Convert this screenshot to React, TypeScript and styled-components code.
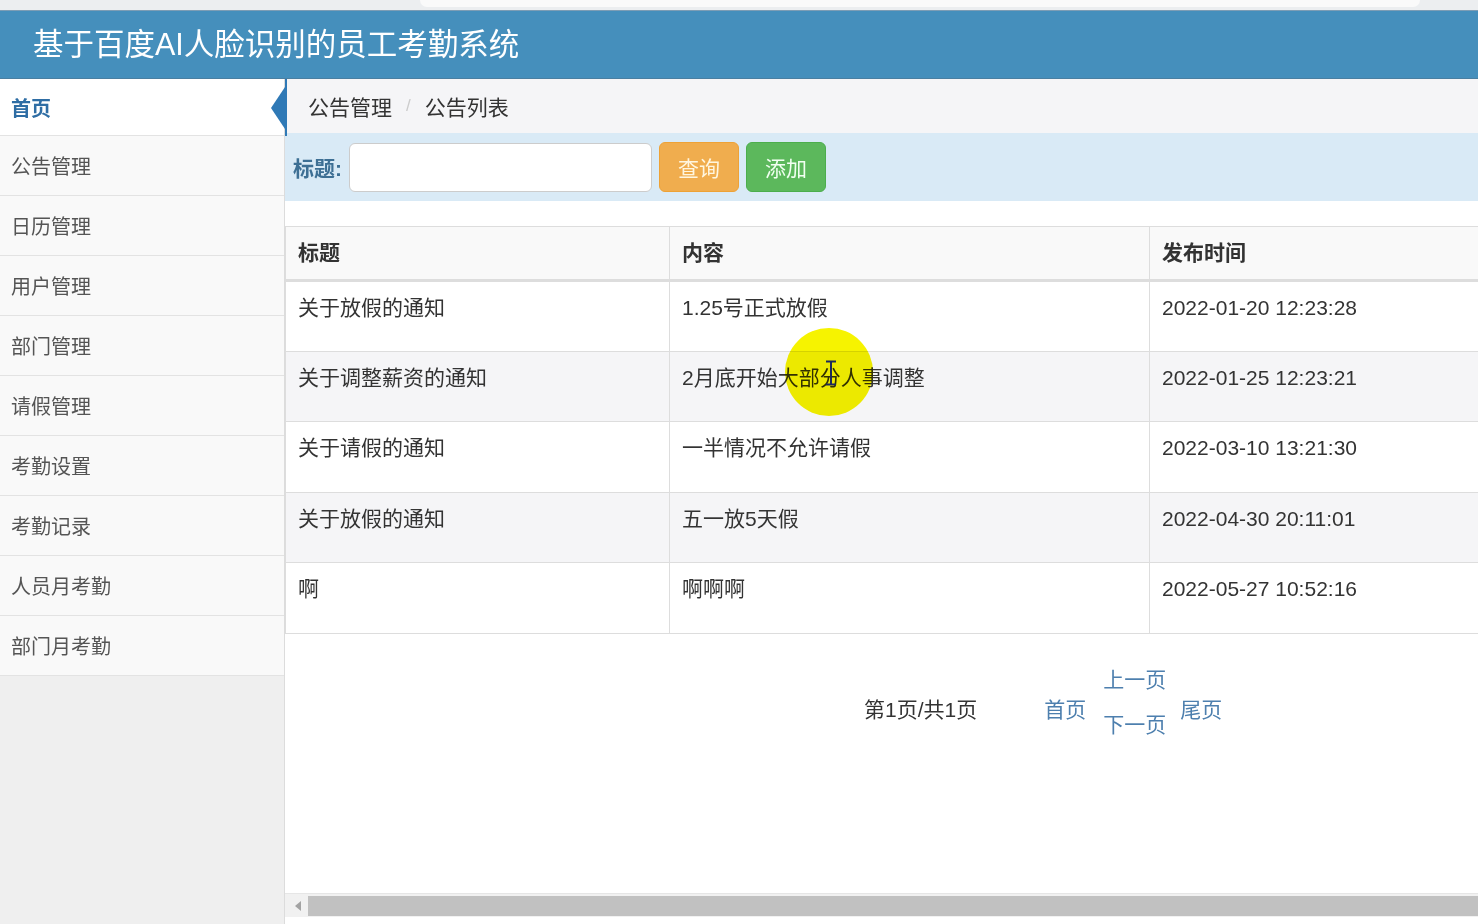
import React from 'react';
import styled, { createGlobalStyle } from 'styled-components';

const GlobalStyle = createGlobalStyle`
  body {
    margin: 0;
    font-family: "Liberation Sans", "Noto Sans CJK SC", sans-serif;
    color: #333;
    background: #fff;
  }
`;

const Page = styled.div`
  position: relative;
  width: 1478px;
  height: 924px;
  overflow: hidden;
  display: flex;
  flex-direction: column;
`;

const TopStrip = styled.div`
  height: 10px;
  flex-shrink: 0;
  background: #eceef0;
  padding-left: 420px;
  box-sizing: border-box;
`;

const TopPill = styled.div`
  width: 1000px;
  height: 7px;
  background: #fafafa;
  border-radius: 0 0 10px 10px;
`;

const Header = styled.div`
  height: 69px;
  flex-shrink: 0;
  box-sizing: border-box;
  background: #458fbc;
  border-top: 1px solid #7d9db5;
  border-bottom: 1px solid #4a7fa1;
  display: flex;
  align-items: center;
  padding: 0 0 5px 33px;
  color: #fff;
  font-size: 30.5px;
`;

const Body = styled.div`
  flex: 1;
  display: flex;
  min-height: 0;
`;

const Sidebar = styled.div`
  width: 284px;
  flex-shrink: 0;
  background: #efefef;
  border-right: 1px solid #dcdcdc;
  display: flex;
  flex-direction: column;
`;

const NavItem = styled.div<{ $active?: boolean }>`
  position: relative;
  height: ${({ $active }) => ($active ? 56 : 59)}px;
  flex-shrink: 0;
  border-bottom: 1px solid #e3e3e3;
  background: ${({ $active }) => ($active ? '#fff' : '#f9f9f9')};
  color: ${({ $active }) => ($active ? '#2e6da4' : '#555')};
  font-weight: ${({ $active }) => ($active ? 700 : 400)};
  font-size: 20px;
  display: flex;
  align-items: center;
  padding-left: 11px;
`;

const ActiveArrow = styled.span`
  position: absolute;
  right: -3px;
  top: 5px;
  width: 0;
  height: 0;
  border-top: 24px solid transparent;
  border-bottom: 24px solid transparent;
  border-right: 16px solid #2f79b6;
`;

const ActiveBar = styled.span`
  position: absolute;
  right: -3px;
  top: 0;
  bottom: -1px;
  width: 2px;
  background: #2f79b6;
`;

const Main = styled.div`
  flex: 1;
  min-width: 0;
  display: flex;
  flex-direction: column;
  overflow: hidden;
  font-size: 21px;
`;

const Breadcrumb = styled.div`
  height: 54px;
  flex-shrink: 0;
  background: #f5f5f7;
  display: flex;
  align-items: center;
  padding-left: 23px;
  gap: 14px;
  color: #333;
`;

const Crumb = styled.span<{ $sep?: boolean }>`
  color: ${({ $sep }) => ($sep ? '#ccc' : '#333')};
  font-size: ${({ $sep }) => ($sep ? 17 : 21)}px;
`;

const SearchBar = styled.div`
  height: 68px;
  flex-shrink: 0;
  background: #d9eaf6;
  display: flex;
  align-items: center;
  padding-left: 8px;
  gap: 7px;
`;

const SearchLabel = styled.label`
  font-weight: 700;
  color: #3d6f94;
  font-size: 21px;
`;

const SearchInput = styled.input`
  width: 303px;
  height: 49px;
  box-sizing: border-box;
  border: 1px solid #ccc;
  border-radius: 6px;
  background: #fff;
`;

const Button = styled.button<{ $tone: 'warn' | 'ok' }>`
  width: 80px;
  height: 50px;
  border: 1px solid ${({ $tone }) => ($tone === 'warn' ? '#eea236' : '#4cae4c')};
  border-radius: 6px;
  background: ${({ $tone }) => ($tone === 'warn' ? '#f0ad4e' : '#5cb85c')};
  color: ${({ $tone }) => ($tone === 'warn' ? '#fff6df' : '#f1fff1')};
  font-family: inherit;
  font-size: 21px;
  padding: 0;
`;

const Table = styled.table`
  margin-top: 25px;
  width: 1400px;
  flex-shrink: 0;
  border-collapse: collapse;
  border: 1px solid #ddd;
  border-right: none;
`;

const Th = styled.th<{ $w?: number }>`
  width: ${({ $w }) => ($w ? `${$w}px` : 'auto')};
  height: 54px;
  box-sizing: border-box;
  text-align: left;
  font-weight: 700;
  padding: 0 12px;
  border-left: 1px solid #ddd;
  border-bottom: 3px solid #ddd;
  background: #f9f9f9;
  line-height: 30px;
`;

const Row = styled.tr<{ $shade?: boolean }>`
  background: ${({ $shade }) => ($shade ? '#f5f5f7' : '#fff')};
`;

const Td = styled.td`
  height: 70.5px;
  box-sizing: border-box;
  vertical-align: top;
  padding: 11px 12px 0;
  line-height: 30px;
  border-left: 1px solid #ddd;
  border-top: 1px solid #ddd;
`;

const Pager = styled.div`
  display: flex;
  align-items: flex-start;
  margin-top: 31px;
  padding-left: 579px;
  line-height: 30px;
`;

const PageInfo = styled.span`
  margin-top: 30px;
  color: #333;
`;

const PageLink = styled.a<{ $side?: boolean; $gap?: number }>`
  color: #4d7fae;
  text-decoration: none;
  margin-top: ${({ $side }) => ($side ? 30 : 0)}px;
  margin-left: ${({ $gap }) => $gap ?? 0}px;
`;

const PageStack = styled.div`
  display: flex;
  flex-direction: column;
  gap: 15px;
  margin: 0 14px 0 17px;
`;

const ScrollBar = styled.div`
  margin-top: auto;
  margin-bottom: 7px;
  height: 24px;
  flex-shrink: 0;
  box-sizing: border-box;
  background: #f1f1f1;
  border-top: 1px solid #e6e6e6;
  display: flex;
  align-items: center;
  padding-left: 2px;
`;

const ScrollArrow = styled.div`
  width: 21px;
  display: flex;
  justify-content: center;
`;

const ScrollThumb = styled.div`
  flex: 1;
  height: 20px;
  background: #c1c1c1;
`;

const Highlight = styled.div`
  position: absolute;
  left: 785px;
  top: 328px;
  width: 88px;
  height: 88px;
  border-radius: 50%;
  background: #f6f300;
  mix-blend-mode: multiply;
`;

const Cursor = styled.svg`
  position: absolute;
  left: 824px;
  top: 360px;
`;

const navItems = ['公告管理', '日历管理', '用户管理', '部门管理', '请假管理', '考勤设置', '考勤记录', '人员月考勤', '部门月考勤'];

const notices = [
  { title: '关于放假的通知', content: '1.25号正式放假', time: '2022-01-20 12:23:28' },
  { title: '关于调整薪资的通知', content: '2月底开始大部分人事调整', time: '2022-01-25 12:23:21' },
  { title: '关于请假的通知', content: '一半情况不允许请假', time: '2022-03-10 13:21:30' },
  { title: '关于放假的通知', content: '五一放5天假', time: '2022-04-30 20:11:01' },
  { title: '啊', content: '啊啊啊', time: '2022-05-27 10:52:16' },
];

const App: React.FC = () => {
  return (
    <Page>
      <GlobalStyle />
      <TopStrip>
        <TopPill />
      </TopStrip>
      <Header>基于百度AI人脸识别的员工考勤系统</Header>
      <Body>
        <Sidebar>
          <NavItem $active>
            首页
            <ActiveArrow />
            <ActiveBar />
          </NavItem>
          {navItems.map((item) => (
            <NavItem key={item}>{item}</NavItem>
          ))}
        </Sidebar>
        <Main>
          <Breadcrumb>
            <Crumb>公告管理</Crumb>
            <Crumb $sep>/</Crumb>
            <Crumb>公告列表</Crumb>
          </Breadcrumb>
          <SearchBar>
            <SearchLabel>标题:</SearchLabel>
            <SearchInput type="text" />
            <Button $tone="warn">查询</Button>
            <Button $tone="ok">添加</Button>
          </SearchBar>
          <Table>
            <thead>
              <tr>
                <Th $w={384}>标题</Th>
                <Th $w={480}>内容</Th>
                <Th>发布时间</Th>
              </tr>
            </thead>
            <tbody>
              {notices.map((n, i) => (
                <Row key={i} $shade={i % 2 === 1}>
                  <Td>{n.title}</Td>
                  <Td>{n.content}</Td>
                  <Td>{n.time}</Td>
                </Row>
              ))}
            </tbody>
          </Table>
          <Pager>
            <PageInfo>第1页/共1页</PageInfo>
            <PageLink $side $gap={67}>首页</PageLink>
            <PageStack>
              <PageLink>上一页</PageLink>
              <PageLink>下一页</PageLink>
            </PageStack>
            <PageLink $side>尾页</PageLink>
          </Pager>
          <ScrollBar>
            <ScrollArrow>
              <svg width="6" height="10" viewBox="0 0 6 10">
                <path d="M6 0 L0 5 L6 10 Z" fill="#a3a3a3" />
              </svg>
            </ScrollArrow>
            <ScrollThumb />
          </ScrollBar>
        </Main>
      </Body>
      <Highlight />
      <Cursor width="14" height="26" viewBox="0 0 14 26">
        <path d="M2 1.5 H12 M7 1.5 V24.5 M2 24.5 H12" stroke="#1d2a5c" strokeWidth="2" fill="none" />
      </Cursor>
    </Page>
  );
};

export default App;
